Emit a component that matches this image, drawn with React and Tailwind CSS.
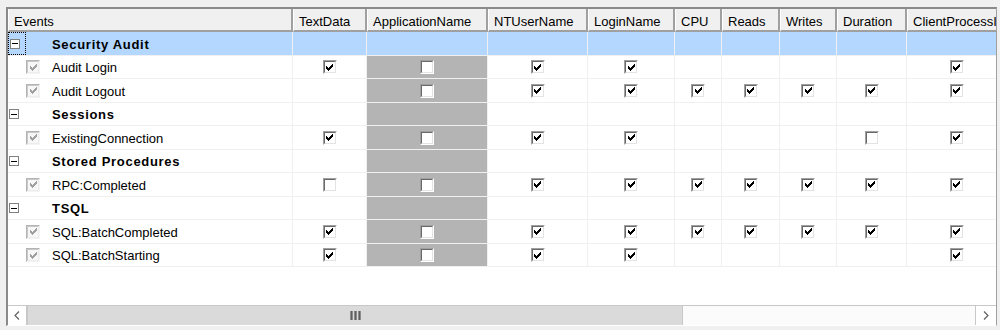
import React from 'react';

const W = ['w-[285px]','w-[74px]','w-[121px]','w-[100px]','w-[87px]','w-[47px]','w-[58px]','w-[57px]','w-[70px]','w-[100px]'];
const HEADERS = ['Events','TextData','ApplicationName','NTUserName','LoginName','CPU','Reads','Writes','Duration','ClientProcessID'];
const n = null;
const ROWS = [
  { cat: true, label: 'Security Audit', selected: true, h: 'h-[24px]' },
  { label: 'Audit Login', v: [1,0,1,1,n,n,n,n,1], h: 'h-[23px]' },
  { label: 'Audit Logout', v: [n,0,1,1,1,1,1,1,1], h: 'h-[24px]' },
  { cat: true, label: 'Sessions', h: 'h-[23px]' },
  { label: 'ExistingConnection', v: [1,0,1,1,n,n,n,0,1], h: 'h-[24px]' },
  { cat: true, label: 'Stored Procedures', h: 'h-[23px]' },
  { label: 'RPC:Completed', v: [0,0,1,1,1,1,1,1,1], h: 'h-[24px]' },
  { cat: true, label: 'TSQL', h: 'h-[23px]' },
  { label: 'SQL:BatchCompleted', v: [1,0,1,1,1,1,1,1,1], h: 'h-[24px]' },
  { label: 'SQL:BatchStarting', v: [1,0,1,1,n,n,n,n,1], h: 'h-[23px]' },
];

const CHECK_D = 'M0 2h1v1h1v1h1v-1h1v-1h1v-1h1v-1h1v3h-1v1h-1v1h-1v1h-1v1h-1v-1h-1v-1h-1z';

function CheckMark({ color }) {
  return (
    <svg width="7" height="7" viewBox="0 0 7 7" shapeRendering="crispEdges" className="block">
      <path d={CHECK_D} fill={color} />
    </svg>
  );
}

function Check({ checked }) {
  return (
    <div className="w-[14px] h-[14px] border-t border-l border-t-[#a0a0a0] border-l-[#a0a0a0] border-b border-r border-b-white border-r-white">
      <div className="w-full h-full border-t border-l border-t-[#696969] border-l-[#696969] border-b border-r border-b-[#e3e3e3] border-r-[#e3e3e3] bg-white flex items-center justify-center">
        {checked ? <CheckMark color="#000" /> : null}
      </div>
    </div>
  );
}

function DisabledCheck() {
  return (
    <div className="w-[14px] h-[14px] border-t border-l border-t-[#b4b4b4] border-l-[#b4b4b4] border-b border-r border-b-[#f4f4f4] border-r-[#f4f4f4]">
      <div className="w-full h-full border-t border-l border-t-[#c8c8c8] border-l-[#c8c8c8] border-b border-r border-b-[#ececec] border-r-[#ececec] bg-[#f7f7f7] flex items-center justify-center">
        <CheckMark color="#a0a0a0" />
      </div>
    </div>
  );
}

function Expander() {
  return (
    <div className="w-[10px] h-[10px] border border-[#808080] bg-white flex items-center justify-center">
      <div className="w-[6px] h-[1px] bg-black" />
    </div>
  );
}

function Row({ row }) {
  const sel = row.selected;
  return (
    <div className={`flex shrink-0 ${row.h}`}>
      <div className={`${W[0]} shrink-0 flex items-stretch border-b border-r border-[#f0f0f0] ${sel ? 'bg-[#b3d7ff]' : 'bg-white'}`}>
        {row.cat ? (
          <>
            <div className={`w-[18px] shrink-0 flex items-center pl-[1px] ${sel ? 'border border-dotted border-black' : ''}`}>
              <Expander />
            </div>
            <div className="w-[26px] shrink-0" />
            <div className="flex items-center pt-[1px] font-bold tracking-[0.7px] leading-none">{row.label}</div>
          </>
        ) : (
          <>
            <div className="w-[18px] shrink-0" />
            <div className="flex items-center"><DisabledCheck /></div>
            <div className="w-[12px] shrink-0" />
            <div className="flex items-center pt-[1px] leading-none">{row.label}</div>
          </>
        )}
      </div>
      {W.slice(1).map((w, i) => {
        const val = row.cat ? null : row.v[i];
        const isApp = i === 1;
        const bg = sel ? 'bg-[#b3d7ff]' : isApp ? 'bg-[#b4b4b4]' : 'bg-white';
        return (
          <div key={i} className={`${w} shrink-0 flex items-center justify-center border-b border-r border-[#f0f0f0] ${bg}`}>
            {val === null ? null : <Check checked={val === 1} />}
          </div>
        );
      })}
    </div>
  );
}

function Grip() {
  return (
    <div className="flex gap-[1px] h-[9px]">
      <div className="w-[3px] h-full bg-[#606060] border-x border-[#8c8c8c]" />
      <div className="w-[3px] h-full bg-[#606060] border-x border-[#8c8c8c]" />
      <div className="w-[3px] h-full bg-[#606060] border-x border-[#8c8c8c]" />
    </div>
  );
}

export default function App() {
  return (
    <div className="w-[1000px] h-[330px] bg-[#f0f0f0] pt-[7px] pl-[6px] text-[13px] text-black font-['Liberation_Sans',Arial,sans-serif]">
      <div className="w-[991px] h-[319px] border-t-2 border-l-2 border-t-[#8a8a8a] border-l-[#8a8a8a] border-r border-b border-r-[#a0a0a0] border-b-white bg-white flex flex-col overflow-hidden">
        {/* header */}
        <div className="flex h-[23px] shrink-0">
          {HEADERS.map((h, i) => (
            <div key={i} className={`${W[i]} shrink-0 bg-[#f0f0f0] border-l border-l-white border-r-2 border-r-[#a0a0a0] border-b-2 border-b-[#a0a0a0] flex items-center pl-[5px] pt-[3px] whitespace-nowrap overflow-hidden leading-none`}>
              {h}
            </div>
          ))}
        </div>
        {ROWS.map((r, i) => <Row key={i} row={r} />)}
        <div className="flex-1 bg-white" />
        {/* horizontal scrollbar */}
        <div className="h-[20px] shrink-0 flex border-t border-[#c8c8c8] bg-[#f7f7f7]">
          <div className="w-[20px] shrink-0 flex items-center justify-center bg-white border-r-2 border-[#c8c8c8]">
            <svg width="6" height="9" viewBox="0 0 6 9"><path d="M5 0.5L1 4.5L5 8.5" fill="none" stroke="#606060" strokeWidth="1.2" /></svg>
          </div>
          <div className="w-[655px] shrink-0 bg-[#dadada] border-r border-[#c8c8c8] flex items-center justify-center">
            <Grip />
          </div>
          <div className="flex-1 bg-[#fbfbfb]" />
          <div className="w-[21px] shrink-0 flex items-center justify-center bg-white border-l border-[#c8c8c8]">
            <svg width="6" height="9" viewBox="0 0 6 9"><path d="M1 0.5L5 4.5L1 8.5" fill="none" stroke="#606060" strokeWidth="1.2" /></svg>
          </div>
        </div>
      </div>
    </div>
  );
}
